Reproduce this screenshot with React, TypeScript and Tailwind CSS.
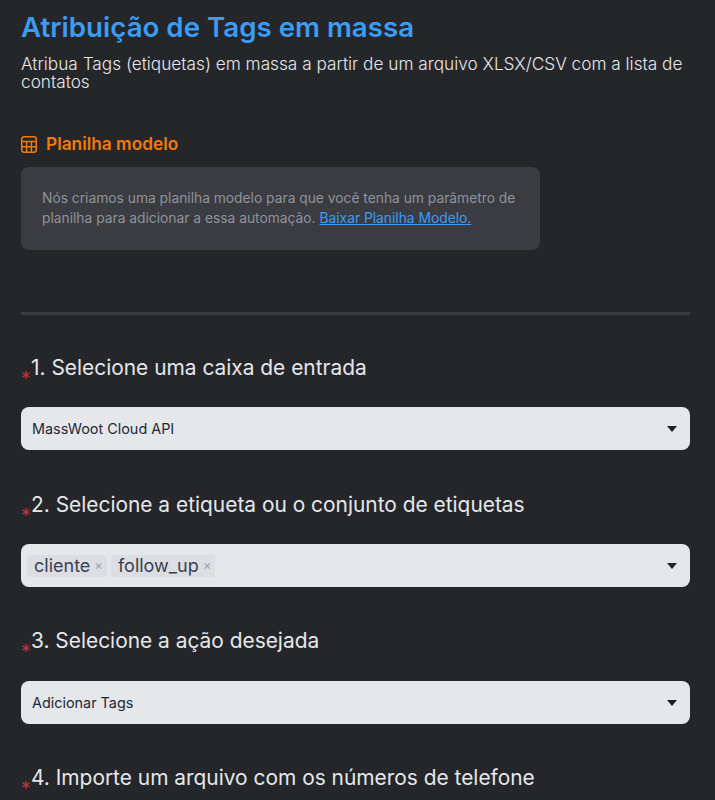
const sans = "font-['Inter',sans-serif]";

function StepLabel({ text }: { text: string }) {
  return (
    <div className="flex items-center h-[32px] text-[20.9px] leading-[32px] font-normal text-[#e5e7eb]">
      <span className="w-[10px] pt-[22px] text-[19px] leading-[20px] text-[#c0343f]">*</span>
      <span>{text}</span>
    </div>
  );
}

function SelectBox({ children, tight }: { children: React.ReactNode; tight?: boolean }) {
  return (
    <div className={`flex items-center justify-between h-[43px] pr-[13px] bg-[#e5e7eb] rounded-[8px] ${tight ? "pl-[6px]" : "pl-[11px]"}`}>
      <div className="flex items-center gap-[4px] text-[14.4px] text-[#1f2937]">{children}</div>
      <svg width="10" height="6" viewBox="0 0 10 6">
        <path d="M0 0h10L5 6z" fill="#1f2127" />
      </svg>
    </div>
  );
}

function Tag({ label }: { label: string }) {
  return (
    <span className="flex items-center gap-[4px] h-[22px] pl-[7px] pr-[4px] bg-[#dcdee3] rounded-[3px] text-[18px] text-[#374151]">
      {label}
      <span className="text-[13px] text-[#9ca3af]">×</span>
    </span>
  );
}

export default function App() {
  return (
    <div className={`${sans} w-[715px] h-[800px] overflow-hidden bg-[#24262a] pl-[21px] pr-[25px] pt-[9px]`}>
      <h1 className="text-[27.7px] leading-[36px] font-semibold text-[#3b9cf5]">Atribuição de Tags em massa</h1>
      <p className="mt-[10px] text-[17.23px] leading-[18px] font-light text-[#e5e7eb]">
        Atribua Tags (etiquetas) em massa a partir de um arquivo XLSX/CSV com a lista de contatos
      </p>

      <div className="mt-[41px] flex items-center gap-[9px] h-[24px] text-[#f07a0c]">
        <svg width="16" height="17" viewBox="0 0 16 17" fill="none" stroke="currentColor" strokeWidth="1.5">
          <rect x="0.75" y="0.75" width="14.5" height="15.5" rx="2.5" />
          <path d="M0.75 5.5h14.5M0.75 10.8h14.5M5.6 5.5v10.7M10.4 5.5v10.7" />
        </svg>
        <span className="text-[17.3px] font-semibold">Planilha modelo</span>
      </div>

      <div className="mt-[11px] w-[519px] h-[83px] rounded-[8px] bg-[#3a3c42] pl-[21px] pr-[20px] pt-[21px] text-[13.8px] leading-[20px] text-[#8f939b]">
        Nós criamos uma planilha modelo para que você tenha um parâmetro de planilha para adicionar a essa automação.{" "}
        <span className="text-[#3b9cf5] underline">Baixar Planilha Modelo.</span>
      </div>

      <div className="mt-[62px] h-[3px] bg-[#3a3c42]" />

      <div className="mt-[37px]">
        <StepLabel text="1. Selecione uma caixa de entrada" />
      </div>
      <div className="mt-[23px]">
        <SelectBox>MassWoot Cloud API</SelectBox>
      </div>

      <div className="mt-[39px]">
        <StepLabel text="2. Selecione a etiqueta ou o conjunto de etiquetas" />
      </div>
      <div className="mt-[23px]">
        <SelectBox tight>
          <Tag label="cliente" />
          <Tag label="follow_up" />
        </SelectBox>
      </div>

      <div className="mt-[38px]">
        <StepLabel text="3. Selecione a ação desejada" />
      </div>
      <div className="mt-[24px]">
        <SelectBox>Adicionar Tags</SelectBox>
      </div>

      <div className="mt-[38px]">
        <StepLabel text="4. Importe um arquivo com os números de telefone" />
      </div>
    </div>
  );
}
